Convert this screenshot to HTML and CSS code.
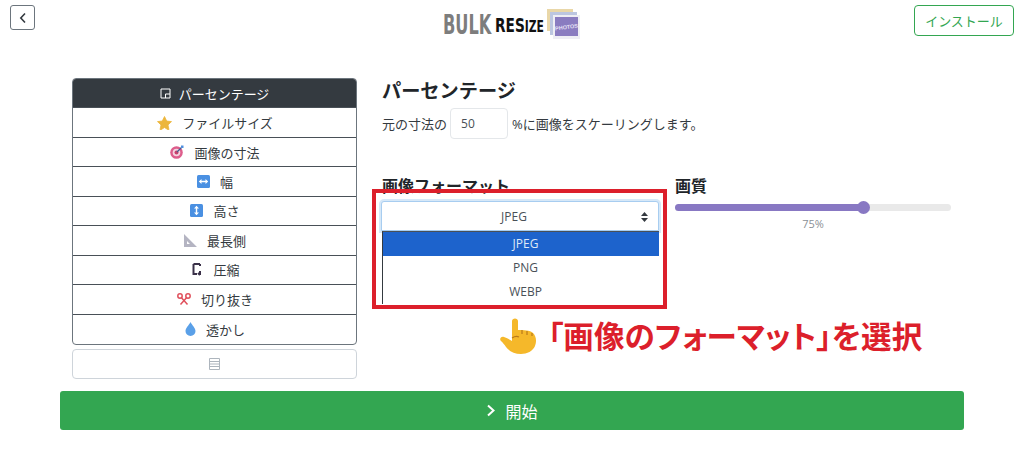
FILE: index.html
```html
<!DOCTYPE html>
<html lang="ja">
<head>
    <meta charset="UTF-8">
    <title>Bulk Resize Photos</title>
    <link rel="stylesheet" href="styles.css">
</head>
<body>
    <header class="top-bar">
        <button class="back-button" aria-label="戻る">
            <svg width="10" height="12" viewBox="0 0 10 12"><path d="M7 1.500 2.800 6 7 10.500" fill="none" stroke="#343a40" stroke-width="1.600"/></svg>
        </button>
        <div class="logo">
            <span class="logo-bulk">BULK</span>
            <span class="logo-resize">RES<small>IZE</small></span>
            <svg class="logo-photos" width="35" height="31" viewBox="0 0 35 31">
                <rect x="1" y="0" width="26" height="22" fill="#e9d7a8"/>
                <rect x="4" y="3" width="27" height="23" fill="#bcc6e0"/>
                <rect x="7" y="6" width="27" height="24" fill="#eeeef4"/>
                <rect x="9" y="8" width="23" height="19" fill="#8a7cc0"/>
                <text x="20.500" y="20" class="logo-photos-text" transform="rotate(-8 20.500 18)">PHOTOS</text>
            </svg>
        </div>
        <button class="install-button">インストール</button>
    </header>

    <main class="content">
        <nav class="side-menu">
            <div class="menu-list">
                <a class="menu-item active">
                    <svg width="11" height="11" viewBox="0 0 11 11"><path d="M1 1h9v9H1zM5.500 10V6H10" fill="none" stroke="#fff" stroke-width="1"/></svg>
                    パーセンテージ
                </a>
                <a class="menu-item">
                    <svg width="15" height="14" viewBox="0 0 15 14"><path d="M7.500.5 9.700 5l4.800.6-3.500 3.300.9 4.300c.1.600-.3.800-.8.600L7.500 11.500l-3.600 2.300c-.5.200-.9 0-.8-.6l.9-4.300L.5 5.600 5.300 5z" fill="#ecb63c" stroke="#ecb63c" stroke-width=".8" stroke-linejoin="round"/></svg>
                    ファイルサイズ
                </a>
                <a class="menu-item">
                    <svg width="14" height="14" viewBox="0 0 14 14"><circle cx="6.500" cy="7.500" r="6.300" fill="#dd5d8c"/><circle cx="6.500" cy="7.500" r="3.800" fill="#f3d4e0"/><circle cx="6.500" cy="7.500" r="2" fill="#c8416f"/><path d="M7 7 12 2" stroke="#3f5f8f" stroke-width="1.200"/><path d="M11 0.500h2.500v2.500h-2.500z" fill="#4f8fe0"/></svg>
                    画像の寸法
                </a>
                <a class="menu-item">
                    <svg width="13" height="13" viewBox="0 0 13 13"><rect width="13" height="13" rx="1.500" fill="#4a90e2"/><path d="M1.800 6.500 4.500 4v5zM11.200 6.500 8.500 4v5z" fill="#fff"/><path d="M4 5.800h5v1.400H4z" fill="#fff"/></svg>
                    幅
                </a>
                <a class="menu-item">
                    <svg width="13" height="13" viewBox="0 0 13 13"><rect width="13" height="13" rx="1.500" fill="#4a90e2"/><path d="M6.500 1.800 4 4.500h5zM6.500 11.200 4 8.500h5z" fill="#fff"/><path d="M5.800 4h1.400v5H5.800z" fill="#fff"/></svg>
                    高さ
                </a>
                <a class="menu-item">
                    <svg width="13" height="13" viewBox="0 0 13 13"><path d="M0 0 13 13H0zM3 7v3h3z" fill="#b4b4c2" fill-rule="evenodd"/></svg>
                    最長側
                </a>
                <a class="menu-item">
                    <svg width="13" height="13" viewBox="0 0 13 13"><path d="M3.500 1h6.500M3.500 1v10h3.500M10 1v2M10 8v4M8 10l2 2" fill="none" stroke="#3a3048" stroke-width="2"/></svg>
                    圧縮
                </a>
                <a class="menu-item">
                    <svg width="14" height="12" viewBox="0 0 14 12"><g fill="none" stroke="#e0505c" stroke-width="1.500"><circle cx="3" cy="3" r="2.200"/><circle cx="11" cy="3" r="2.200"/><path d="M4.500 4.800 10.500 11.500M9.500 4.800 3.500 11.500"/></g></svg>
                    切り抜き
                </a>
                <a class="menu-item">
                    <svg width="11" height="14" viewBox="0 0 11 14"><path d="M5.500 0C4 3 .5 6 .5 9a5 5 0 0 0 10 0C10.500 6 7 3 5.500 0z" fill="#5aa0e8"/></svg>
                    透かし
                </a>
            </div>
            <button class="menu-toggle" aria-label="メニュー">
                <svg width="11" height="12" viewBox="0 0 11 12"><path d="M.5.500h10v11H.5zM.5 3.500h10M.5 6h10M.5 8.500h10" fill="none" stroke="#adb5bd" stroke-width="1"/></svg>
            </button>
        </nav>

        <section class="panel">
            <h2 class="panel-title">パーセンテージ</h2>
            <div class="scale-row">
                <span>元の寸法の</span>
                <input class="scale-input" type="text" value="50">
                <span>%に画像をスケーリングします。</span>
            </div>

            <div class="options-row">
                <div class="format-col">
                    <h3 class="option-label">画像フォーマット</h3>
                    <div class="select-box">
                        <span>JPEG</span>
                        <svg class="select-arrows" width="7" height="10" viewBox="0 0 7 10"><path d="M3.500 0 7 4H0zM3.500 10 7 6H0z" fill="#343a40"/></svg>
                        <ul class="select-list">
                            <li class="selected">JPEG</li>
                            <li>PNG</li>
                            <li>WEBP</li>
                        </ul>
                    </div>
                    <div class="highlight-box"></div>
                    <div class="callout">
                        <svg class="callout-hand" width="38" height="36" viewBox="0 0 38 36">
                            <path d="M12 3c0-3.500 6-3.500 6 0v9c5 0 12 0 15 3 3 3 4 8 2 13-2 5-8 8-14 8-7 0-12-3-15-7-2-3-3-4-5-6-2-2 0-5 3-4 2 .5 4 1.500 8 4z" fill="#f5b82a"/>
                            <path d="M22 12v4M27 13v4M32 15v3M12 20c3-2 5-2 7-1" stroke="#b9791a" stroke-width="1.200" fill="none"/>
                        </svg>
                        <span class="callout-text">「画像のフォーマット」を選択</span>
                    </div>
                </div>
                <div class="quality-col">
                    <h3 class="option-label">画質</h3>
                    <div class="slider">
                        <div class="slider-fill" style="width: 68%"></div>
                        <div class="slider-thumb" style="left: 68%"></div>
                    </div>
                    <div class="slider-value">75%</div>
                </div>
            </div>
        </section>
    </main>

    <div class="start-wrap">
        <button class="start-button">
            <svg width="10" height="13" viewBox="0 0 10 13"><path d="M2 1.500 7.500 6.500 2 11.500" fill="none" stroke="#fff" stroke-width="2"/></svg>
            開始
        </button>
    </div>
</body>
</html>
```

FILE: styles.css
```css
* {
    box-sizing: border-box;
}

body {
    margin: 0;
    height: 451px;
    overflow: hidden;
    background-color: #fff;
    color: #212529;
    font-family: "Open Sans", "Noto Sans CJK JP", sans-serif;
    font-size: 13px;
}

button {
    font-family: inherit;
    cursor: pointer;
}

/* header */
.top-bar {
    display: grid;
    grid-template-columns: 1fr auto 1fr;
    align-items: start;
    height: 78px;
    padding: 5px 10px 0;
}

.back-button {
    display: flex;
    align-items: center;
    justify-content: center;
    width: 25px;
    height: 25px;
    padding: 0;
    background-color: #fff;
    border: 1px solid #6c757d;
    border-radius: 3px;
}

.logo {
    display: flex;
    align-items: center;
    height: 31px;
    margin-top: 4px;
}

.logo-bulk {
    width: 49px;
    color: #7d7d7d;
    font-family: "DejaVu Sans", sans-serif;
    font-size: 27px;
    font-weight: bold;
    line-height: 31px;
    transform: scaleX(0.6);
    transform-origin: left center;
}

.logo-resize {
    width: 50px;
    margin-left: 3px;
    color: #111;
    font-family: "DejaVu Sans", sans-serif;
    font-size: 19px;
    font-weight: bold;
    white-space: nowrap;
    transform: scaleX(0.72);
    transform-origin: left center;
}

.logo-resize small {
    font-size: 15px;
}

.logo-photos {
    margin-left: 1px;
}

.logo-photos-text {
    fill: #e6e0f5;
    font-family: "Liberation Sans", sans-serif;
    font-size: 5.500px;
    font-weight: bold;
    text-anchor: middle;
}

.install-button {
    justify-self: end;
    width: 100px;
    height: 31px;
    padding: 0;
    background-color: #fff;
    border: 1px solid #33a651;
    border-radius: 4px;
    color: #33a651;
    font-size: 13px;
}

/* main layout */
.content {
    display: flex;
    padding-left: 72px;
}

.side-menu {
    width: 285px;
}

.menu-list {
    display: grid;
    grid-auto-rows: 1fr;
    height: 267px;
    border: 1px solid #6c757d;
    border-radius: 4px;
    overflow: hidden;
}

.menu-item {
    display: flex;
    align-items: center;
    justify-content: center;
    gap: 10px;
    padding-left: 1px;
    border-bottom: 1px solid #495057;
    color: #343a40;
}

.menu-item:last-child {
    border-bottom: none;
}

.menu-item.active {
    gap: 8px;
    padding-left: 0;
    background-color: #343a40;
    color: #fff;
}

.menu-toggle {
    display: flex;
    align-items: center;
    justify-content: center;
    width: 100%;
    height: 30px;
    margin-top: 4px;
    background-color: #fff;
    border: 1px solid #ced4da;
    border-radius: 4px;
}

.panel {
    margin-left: 25px;
    width: 569px;
}

.panel-title {
    margin: 0;
    font-size: 19.200px;
    line-height: 26px;
    font-weight: bold;
}

.scale-row {
    display: flex;
    align-items: center;
    gap: 3px;
    margin-top: 4px;
    color: #343a40;
}

.scale-input {
    width: 58px;
    height: 31px;
    margin-right: 1px;
    padding: 0 10px;
    border: 1px solid #e4e7ea;
    border-radius: 4px;
    color: #495057;
    font-family: inherit;
    font-size: 12px;
}

.options-row {
    display: flex;
    margin-top: 35px;
}

.format-col {
    position: relative;
    width: 293px;
}

.option-label {
    margin: 0;
    font-size: 16px;
    line-height: 24px;
    font-weight: bold;
}

.select-box {
    position: relative;
    display: flex;
    align-items: center;
    justify-content: center;
    width: 278px;
    height: 30px;
    margin: 3px 0 0 -1px;
    padding-right: 12px;
    background-color: #fff;
    border: 1px solid #a8cdf0;
    border-radius: 3px 3px 0 0;
    box-shadow: 0 0 0 2px #d6e8f8;
    color: #495057;
    font-size: 12px;
}

.select-arrows {
    position: absolute;
    right: 10px;
    top: 10px;
}

/* open dropdown lies over the page */
.select-list {
    position: absolute;
    top: 29px;
    left: 0;
    width: 277px;
    margin: 0;
    padding: 0;
    list-style: none;
    background-color: #fff;
    border-left: 1px solid #343a40;
    border-top: 1px solid #495057;
    text-align: center;
}

.select-list li {
    height: 24px;
    padding-left: 9px;
    line-height: 24px;
}

.select-list .selected {
    background-color: #1d63cc;
    color: #dfe9f7;
}

/* annotation drawn over the screenshot */
.highlight-box {
    position: absolute;
    top: 15px;
    left: -10px;
    width: 295px;
    height: 120px;
    border: 4px solid #dc1f2b;
}

.callout {
    position: absolute;
    top: 142px;
    left: 118px;
    display: flex;
    align-items: center;
    white-space: nowrap;
    color: #dc1f2b;
    font-size: 30.600px;
    font-weight: 700;
    font-feature-settings: "palt";
    line-height: 40px;
}

.callout-hand {
    flex: none;
}

.callout-text {
    margin-left: 10px;
}

.quality-col {
    width: 276px;
    color: #212529;
}

.slider {
    position: relative;
    height: 7px;
    margin-top: 6px;
    background-color: #e9e9e9;
    border-radius: 4px;
}

.slider-fill {
    height: 100%;
    background-color: #8878c3;
    border-radius: 4px;
}

.slider-thumb {
    position: absolute;
    top: -3px;
    width: 13px;
    height: 13px;
    margin-left: -6px;
    background-color: #8878c3;
    border-radius: 50%;
}

.slider-value {
    margin-top: 5px;
    text-align: center;
    color: #8a9096;
    font-size: 11px;
}

/* start */
.start-wrap {
    padding: 0 60px;
    margin-top: 12px;
}

.start-button {
    display: flex;
    align-items: center;
    justify-content: center;
    gap: 9px;
    width: 100%;
    height: 39px;
    background-color: #33a651;
    border: none;
    border-radius: 3px;
    color: #fff;
    font-size: 16px;
}
```
